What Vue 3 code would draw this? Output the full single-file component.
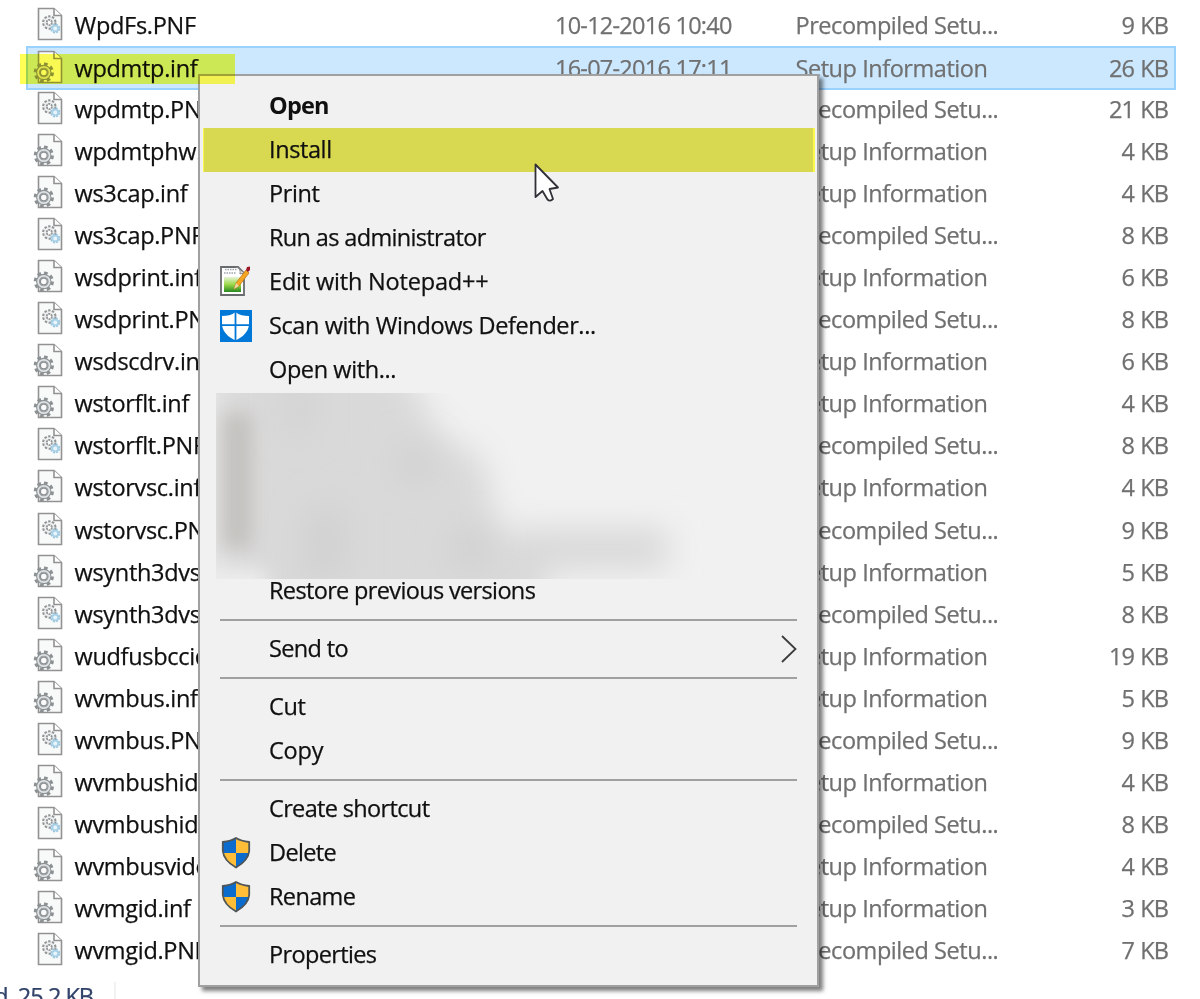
<script setup>
import { ref } from "vue";

const setup = "Precompiled Setu...";
const info = "Setup Information";

const files = ref([
  { name: "WpdFs.PNF", date: "10-12-2016 10:40", type: setup, size: "9 KB" },
  { name: "wpdmtp.inf", date: "16-07-2016 17:11", type: info, size: "26 KB", selected: true },
  { name: "wpdmtp.PNF", type: setup, size: "21 KB" },
  { name: "wpdmtphw.inf", type: info, size: "4 KB" },
  { name: "ws3cap.inf", type: info, size: "4 KB" },
  { name: "ws3cap.PNF", type: setup, size: "8 KB" },
  { name: "wsdprint.inf", type: info, size: "6 KB" },
  { name: "wsdprint.PNF", type: setup, size: "8 KB" },
  { name: "wsdscdrv.inf", type: info, size: "6 KB" },
  { name: "wstorflt.inf", type: info, size: "4 KB" },
  { name: "wstorflt.PNF", type: setup, size: "8 KB" },
  { name: "wstorvsc.inf", type: info, size: "4 KB" },
  { name: "wstorvsc.PNF", type: setup, size: "9 KB" },
  { name: "wsynth3dvsc.inf", type: info, size: "5 KB" },
  { name: "wsynth3dvsc.PNF", type: setup, size: "8 KB" },
  { name: "wudfusbccid.inf", type: info, size: "19 KB" },
  { name: "wvmbus.inf", type: info, size: "5 KB" },
  { name: "wvmbus.PNF", type: setup, size: "9 KB" },
  { name: "wvmbushid.inf", type: info, size: "4 KB" },
  { name: "wvmbushid.PNF", type: setup, size: "8 KB" },
  { name: "wvmbusvideo.inf", type: info, size: "4 KB" },
  { name: "wvmgid.inf", type: info, size: "3 KB" },
  { name: "wvmgid.PNF", type: setup, size: "7 KB" },
]);

const menu = ref([
  { label: "Open", bold: true },
  { label: "Install", active: true },
  { label: "Print" },
  { label: "Run as administrator", fit: "tight" },
  { label: "Edit with Notepad++", icon: "notepad", fit: "loose" },
  { label: "Scan with Windows Defender...", icon: "defender" },
  { label: "Open with..." },
  { kind: "smudge" },
  { label: "Restore previous versions", fit: "tight" },
  { kind: "line" },
  { label: "Send to", arrow: true, fit: "tight" },
  { kind: "line" },
  { label: "Cut" },
  { label: "Copy", fit: "loose" },
  { kind: "line" },
  { label: "Create shortcut", fit: "tight" },
  { label: "Delete", icon: "shield", fit: "tight" },
  { label: "Rename", icon: "shield", fit: "tight" },
  { kind: "line" },
  { label: "Properties", fit: "tight" },
]);
</script>

<template>
  <div class="explorer">
    <div class="files">
      <div v-for="file in files" :key="file.name" class="row" :class="{ selected: file.selected }">
        <svg class="file-icon" viewBox="0 0 32 34">
          <path d="M6.5 1.5H22L29.5 8.5V32.5H6.5Z" fill="#f8f9f9" stroke="#929292" stroke-width="1.6" />
          <path d="M22 1.5V8.5H29.5" fill="#fff" stroke="#929292" stroke-width="1.6" />
          <g v-if="file.name.endsWith('.inf')" fill="none" stroke="#8b9093">
            <circle cx="11.8" cy="22.5" r="8.6" stroke-width="3" stroke-dasharray="3.6 3.154" />
            <circle cx="11.8" cy="22.5" r="5.8" fill="#e8eaec" stroke="#8d9295" stroke-width="3.8" />
            <circle cx="11.8" cy="22.5" r="5.7" stroke="#dfe2e4" stroke-width="1.8" />
            <circle cx="11.8" cy="22.5" r="3.4" fill="#fafafa" stroke-width="1.3" />
          </g>
          <g v-else fill="none">
            <circle cx="17.3" cy="15.5" r="6.2" fill="#eceeef" stroke="#929596" stroke-width="2" stroke-dasharray="2.4 1.5" />
            <circle cx="17.3" cy="15.5" r="2.6" fill="#fff" stroke="#929596" stroke-width="1.8" stroke-dasharray="2 0.72" />
            <circle cx="23.2" cy="21.5" r="4" stroke="#9bc5dd" stroke-width="2" stroke-dasharray="2 1.14" />
            <circle cx="23.2" cy="21.5" r="2.9" fill="#e8f5fc" stroke="#a8d0e6" stroke-width="1.8" />
          </g>
        </svg>
        <span class="name">{{ file.name }}</span>
        <span class="date">{{ file.date }}</span>
        <span class="type">{{ file.type }}</span>
        <span class="size">{{ file.size }}</span>
      </div>
    </div>

    <div class="status">
      <span class="status-text">1 item selected&nbsp; 25.2 KB</span>
    </div>

    <div class="menu">
      <template v-for="(item, i) in menu" :key="i">
        <div v-if="item.kind === 'line'" class="line"></div>
        <div v-else-if="item.kind === 'smudge'" class="smudge">
          <svg viewBox="0 0 540 186">
            <defs>
              <filter id="soft" x="-30%" y="-60%" width="160%" height="220%">
                <feGaussianBlur stdDeviation="16" />
              </filter>
              <filter id="soft-small" x="-100%" y="-50%" width="300%" height="200%">
                <feGaussianBlur stdDeviation="9" />
              </filter>
            </defs>
            <g filter="url(#soft)">
              <path d="M-4 -30H188L222 40L266 65L284 138L330 150V225H-4Z" fill="#d9d9d9" />
              <path d="M300 136H452V176H300Z" fill="#d8d8d8" />
            </g>
            <g filter="url(#soft)" fill="#d1d1d1">
              <circle cx="200" cy="70" r="20" />
              <circle cx="255" cy="156" r="22" />
              <path d="M90 115H130V185H85Z" />
              <path d="M70 -10H95V40H70Z" />
            </g>
            <rect x="6" y="20" width="30" height="135" fill="#c4c2bf" filter="url(#soft-small)" />
            <rect x="-20" y="176" width="70" height="34" fill="#ededed" filter="url(#soft-small)" />
          </svg>
        </div>
        <div v-else class="item" :class="[item.fit, { bold: item.bold, active: item.active }]">
          <span class="item-icon">
            <svg v-if="item.icon === 'notepad'" viewBox="0 0 32 32">
              <defs>
                <linearGradient id="grass" x1="0" y1="0" x2="0" y2="1">
                  <stop offset="0" stop-color="#e7f4d6" />
                  <stop offset="0.5" stop-color="#9bd84a" />
                  <stop offset="1" stop-color="#28881f" />
                </linearGradient>
              </defs>
              <path d="M1 1H18L24 7V29H1Z" fill="#fff" stroke="#686b6d" stroke-width="1.8" />
              <path d="M4 11H21V26H4Z" fill="url(#grass)" />
              <path d="M5 3.5H17M4 7H16" stroke="#9ea5aa" stroke-width="1.5" stroke-dasharray="1.5 1" />
              <path d="M16 1Q21 2 20 8L24 7" fill="#ddd" stroke="#888" />
              <path d="M14 23L16 17L26 4L29 7L19 20Z" fill="#f5a623" stroke="#b76d0c" stroke-width="0.7" />
              <path d="M14 23L16 17L19 20Z" fill="#ecd9a8" />
              <path d="M26 4L27 1L30 0.5V4L28 6Z" fill="#9c1728" />
            </svg>
            <svg v-else-if="item.icon === 'defender'" viewBox="0 0 32 32">
              <path d="M0 0H32V32H0Z" fill="#0078d7" />
              <path d="M15.5 2C12 5 7 6 2 6V15C3 22 8 27 15.5 30.5C23 27 28 22 29 15V6C24 6 19 5 15.5 2Z" fill="#fff" />
              <path d="M15.5 1V31M1 15.2H30" stroke="#0078d7" stroke-width="1.8" />
            </svg>
            <svg v-else-if="item.icon === 'shield'" viewBox="0 0 32 32">
              <path d="M16 1C12 3.5 7 4.5 2.8 5V14C3.5 21 8 26 16 30.5V1Z" fill="#0b6ccd" />
              <path d="M16 1C20 3.5 25 4.5 29.2 5V14C28.5 21 24 26 16 30.5V1Z" fill="#ffbd38" />
              <path d="M2.8 16H16V30.5C8 26 4 22 2.8 16Z" fill="#ffbd38" />
              <path d="M16 16H29.2C28 22 24 26 16 30.5Z" fill="#0b6ccd" />
              <path d="M16 1C12 3.5 7 4.5 2.8 5V14C3.5 21 8 26 16 30.5C24 26 28.5 21 29.2 14V5C25 4.5 20 3.5 16 1Z" fill="none" stroke="#505558" stroke-width="1.8" />
            </svg>
          </span>
          <span class="label">{{ item.label }}</span>
          <svg v-if="item.arrow" class="arrow" viewBox="0 0 16 28">
            <path d="M1 1L14.5 14L1 27" fill="none" stroke="#3c3c3c" stroke-width="1.8" />
          </svg>
        </div>
      </template>
    </div>

    <div class="marker"></div>

    <svg class="cursor" viewBox="0 0 26 40">
      <path d="M1.5 1.5V34L8.5 28L13.5 36.5Q16 39 19 36L15.5 26L24 24.5Z" fill="#fff" stroke="#303036" stroke-width="1.8" stroke-linejoin="round" />
    </svg>
  </div>
</template>

<style>
body {
  background: #fff;
  overflow: hidden;
}
</style>

<style scoped>
* {
  box-sizing: border-box;
}

.explorer {
  position: relative;
  width: 1200px;
  height: 999px;
  padding-top: 4px;
  overflow: hidden;
  background: #fff;
  font-family: "Open Sans", "Noto Sans", sans-serif;
  font-size: 23.5px;
  letter-spacing: -0.4px;
  white-space: nowrap;
  -webkit-text-stroke: 0.25px currentColor;
}

.files {
  display: flex;
  flex-direction: column;
  height: 967px;
  margin-left: 26px;
  width: 1150px;
}

.row {
  flex: 1;
  display: grid;
  grid-template-columns: 42.5px 480.5px 240.5px 239.5px 1fr;
  align-items: center;
  min-height: 0;
  padding: 0 8px 0 6px;
  border: 0 solid #99d1ff;
  line-height: 40px;
  color: #707070;
}

.row.selected {
  flex: 0 0 44px;
  margin-bottom: -2px;
  padding: 0 6px 0 4px;
  border-width: 2px;
  background: #cce8ff;
}

.file-icon {
  width: 32px;
  height: 34px;
  margin-bottom: 2px;
}

.name {
  font-kerning: none;
  letter-spacing: -0.3px;
  color: #101010;
}

.date {
  letter-spacing: -0.75px;
}

.type {
  letter-spacing: -0.45px;
}

.size {
  text-align: right;
  letter-spacing: -0.9px;
  word-spacing: 1px;
}

.status {
  display: flex;
  justify-content: flex-end;
  width: 116px;
  height: 40px;
  margin-top: 11px;
  padding-right: 21px;
  border-right: 2px solid #f2f2f2;
  line-height: 28px;
  letter-spacing: -1px;
  color: #32436b;
}

.menu {
  position: absolute;
  left: 198px;
  top: 74px;
  width: 621px;
  height: 913px;
  padding: 8px 3px 7px 4px;
  border: 2px solid #a0a0a0;
  background: #f1f1f1;
  box-shadow: 4px 4px 4px rgba(0, 0, 0, 0.5);
  color: #101010;
}

.item {
  display: flex;
  align-items: center;
  height: 44px;
  padding: 0 17px 0 16px;
}

.item.active {
  margin: 0 -1px;
  padding: 0 16px;
  border: solid #f8f84e;
  border-width: 0 2px 0 1px;
  background: #d9d951;
}

.item.bold {
  font-weight: 700;
  letter-spacing: -0.8px;
  -webkit-text-stroke: 0;
}

.item.tight {
  letter-spacing: -0.65px;
}

.item.loose {
  letter-spacing: -0.18px;
}

.item-icon {
  width: 49px;
  height: 32px;
}

.item-icon svg {
  width: 32px;
  height: 32px;
}

.label {
  flex: 1;
  padding-bottom: 2px;
}

.arrow {
  width: 16px;
  height: 28px;
}

.line {
  height: 14px;
  margin: 0 17px 0 16px;
  padding-top: 6px;
}

.line::before {
  content: "";
  display: block;
  height: 2px;
  background: #a0a0a0;
}

.smudge {
  height: 177px;
  padding: 1px 0 0 12px;
}

.smudge svg {
  display: block;
  width: 540px;
  height: 186px;
  overflow: hidden;
}

.marker {
  position: absolute;
  left: 20px;
  top: 54px;
  width: 215px;
  height: 30px;
  background: #ffff55;
  mix-blend-mode: multiply;
}

.cursor {
  position: absolute;
  left: 534px;
  top: 163px;
  width: 26px;
  height: 40px;
}
</style>
